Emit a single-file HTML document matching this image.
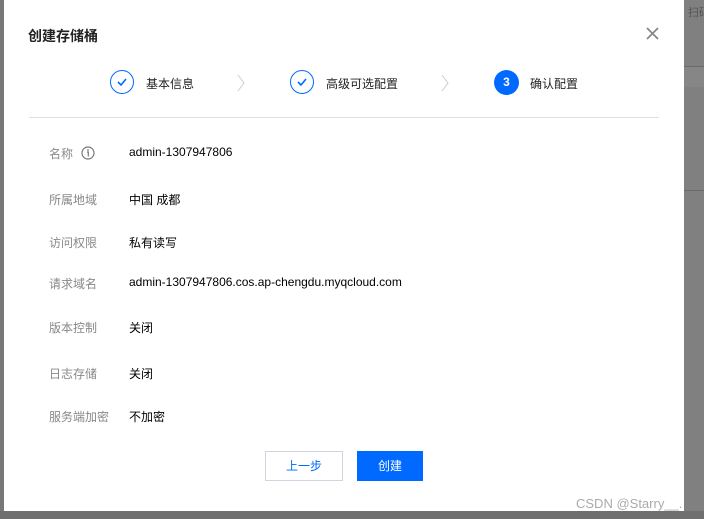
<!DOCTYPE html>
<html><head><meta charset="utf-8"><style>
body{margin:0;width:704px;height:519px;overflow:hidden;background:#7a7a7a;font-family:"Liberation Sans","Noto Sans CJK SC",sans-serif;position:relative}
.bg{position:absolute;left:684px;top:0;width:20px;height:519px;background:#808080}
.dlg{position:absolute;left:4px;top:0;width:680px;height:511px;background:#fff}
.t{position:absolute;font-size:12px;color:#000;white-space:nowrap}
.l{color:#888}
.circ{position:absolute;width:24px;height:24px;border:1px solid #0069ff;border-radius:50%;box-sizing:border-box}
</style></head><body>
<div class="bg"></div>
<div style="position:absolute;left:688px;top:4px;font-size:11px;color:#555;white-space:nowrap">扫码</div>
<div style="position:absolute;left:684px;top:66px;width:20px;height:20px;background:#868686;border-top:1px solid #6a6a6a"></div>
<div style="position:absolute;left:684px;top:190px;width:20px;height:1px;background:#6a6a6a"></div>
<div style="position:absolute;left:0;top:0;width:4px;height:519px;background:#787878"></div>
<div style="position:absolute;left:0;top:511px;width:704px;height:8px;background:#6f6f6f"></div>
<div class="dlg">
<div class="t" style="left:24px;top:26px;font-size:14px;font-weight:bold;color:#222">创建存储桶</div>
<svg style="position:absolute;left:642px;top:27px" width="13" height="13"><path d="M1 1L12 12M12 1L1 12" stroke="#888" stroke-width="1.8"/></svg>
<div class="circ" style="left:106px;top:70px"></div>
<svg style="position:absolute;left:112px;top:76px" width="12" height="12"><path d="M2 6l3 3 5-6" fill="none" stroke="#0069ff" stroke-width="1.6"/></svg>
<div class="t" style="left:142px;top:75px;color:#222">基本信息</div>
<svg style="position:absolute;left:232px;top:74px" width="10" height="18"><path d="M2 1l6 8-6 8" fill="none" stroke="#ccc"/></svg>
<div class="circ" style="left:286px;top:70px"></div>
<svg style="position:absolute;left:292px;top:76px" width="12" height="12"><path d="M2 6l3 3 5-6" fill="none" stroke="#0069ff" stroke-width="1.6"/></svg>
<div class="t" style="left:322px;top:75px;color:#222">高级可选配置</div>
<svg style="position:absolute;left:436px;top:74px" width="10" height="18"><path d="M2 1l6 8-6 8" fill="none" stroke="#ccc"/></svg>
<div style="position:absolute;left:490px;top:70px;width:25px;height:25px;border-radius:50%;background:#0069ff;color:#fff;font-size:12px;font-weight:bold;text-align:center;line-height:25px">3</div>
<div class="t" style="left:526px;top:75px;color:#222">确认配置</div>
<div style="position:absolute;left:25px;top:117px;width:630px;height:1px;background:#e0e0e0"></div>
<div class="t l" style="left:45px;top:145px">名称</div>
<svg style="position:absolute;left:77px;top:146px" width="14" height="14"><circle cx="7" cy="7" r="6" fill="none" stroke="#777" stroke-width="1.2"/><circle cx="7" cy="4" r="0.9" fill="#777"/><path d="M6 6h1.3v4.5" fill="none" stroke="#777" stroke-width="1.2"/></svg>
<div class="t" style="left:125px;top:145px">admin-1307947806</div>
<div class="t l" style="left:45px;top:191px">所属地域</div><div class="t" style="left:125px;top:191px">中国 成都</div>
<div class="t l" style="left:45px;top:234px">访问权限</div><div class="t" style="left:125px;top:234px">私有读写</div>
<div class="t l" style="left:45px;top:275px">请求域名</div><div class="t" style="left:125px;top:275px">admin-1307947806.cos.ap-chengdu.myqcloud.com</div>
<div class="t l" style="left:45px;top:319px">版本控制</div><div class="t" style="left:125px;top:319px">关闭</div>
<div class="t l" style="left:45px;top:365px">日志存储</div><div class="t" style="left:125px;top:365px">关闭</div>
<div class="t l" style="left:45px;top:408px">服务端加密</div><div class="t" style="left:125px;top:408px">不加密</div>
<div style="position:absolute;left:261px;top:451px;width:76px;height:28px;border:1px solid #cfd5de;color:#0069ff;font-size:12px;text-align:center;line-height:28px">上一步</div>
<div style="position:absolute;left:353px;top:451px;width:66px;height:30px;background:#0069ff;color:#fff;font-size:12px;text-align:center;line-height:30px">创建</div>
<div class="t" style="left:572px;top:496px;font-size:13px;color:#aaa">CSDN @Starry__.</div>
</div>
</body></html>
